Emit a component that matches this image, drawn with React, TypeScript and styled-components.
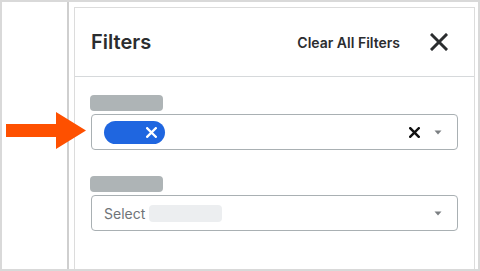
import React from 'react';
import styled, { createGlobalStyle } from 'styled-components';

const GlobalStyle = createGlobalStyle`
  html, body {
    margin: 0;
    padding: 0;
    background: #ffffff;
  }
  body {
    font-family: Inter, 'Liberation Sans', Arial, sans-serif;
  }
`;

interface FilterProps {
  selected?: boolean;
}

const CloseIcon = ({ size, stroke }: { size: number; stroke: number }) => (
  <svg width={size} height={size} viewBox="0 0 18 18" fill="none">
    <path
      d="M2 2L16 16M16 2L2 16"
      stroke="currentColor"
      strokeWidth={stroke}
      strokeLinecap="square"
    />
  </svg>
);

const Caret = () => (
  <svg width="8" height="5" viewBox="0 0 8 5">
    <path d="M0.5 0.5H7.5L4 4.5Z" fill="#7b7f82" />
  </svg>
);

const FilterField = ({ selected }: FilterProps) => (
  <Field>
    <LabelBar />
    <SelectBox>
      {selected ? (
        <Chip>
          <ChipClose>
            <CloseIcon size={11} stroke={3.8} />
          </ChipClose>
        </Chip>
      ) : (
        <Placeholder>
          Select
          <PlaceholderBar />
        </Placeholder>
      )}
      <Controls>
        {selected && (
          <ClearButton>
            <CloseIcon size={11} stroke={4} />
          </ClearButton>
        )}
        <Caret />
      </Controls>
    </SelectBox>
  </Field>
);

export default function App(): React.ReactElement {
  return (
    <>
      <GlobalStyle />
      <Frame>
        <Backdrop />
        <Drawer>
          <Panel>
            <Header>
              <Title>Filters</Title>
              <HeaderActions>
                <ClearAll>Clear All Filters</ClearAll>
                <HeaderClose>
                  <CloseIcon size={18} stroke={3} />
                </HeaderClose>
              </HeaderActions>
            </Header>
            <Body>
              <FilterField selected />
              <FilterField />
            </Body>
          </Panel>
        </Drawer>
        <Pointer viewBox="0 0 80 38" width="80" height="38">
          <path d="M0 12H50V0L80 18.5L50 37V25H0Z" fill="#fe5000" />
        </Pointer>
      </Frame>
    </>
  );
}

const Frame = styled('div')`
  position: relative;
  box-sizing: border-box;
  display: flex;
  width: 480px;
  height: 271px;
  border: 2px solid #d9d9d9;
  overflow: hidden;
`;

const Backdrop = styled('div')`
  flex: 0 0 65px;
`;

const Drawer = styled('div')`
  flex: 1;
  display: flex;
  box-sizing: border-box;
  border-left: 2px solid #cfcfcf;
  padding: 5px 3px 0 5px;
`;

const Panel = styled('div')`
  flex: 1;
  display: flex;
  flex-direction: column;
  border: 1px solid #dcdcdc;
  border-bottom: none;
`;

const Header = styled('div')`
  display: flex;
  align-items: center;
  justify-content: space-between;
  height: 68px;
  padding: 0 26px 0 16px;
  border-bottom: 1px solid #d6d9db;
`;

const Title = styled('h2')`
  margin: 0;
  font-size: 20px;
  font-weight: 600;
  color: #2b2d2f;
`;

const HeaderActions = styled('div')`
  display: flex;
  align-items: center;
  gap: 30px;
`;

const ClearAll = styled('span')`
  font-size: 14px;
  font-weight: 600;
  color: #2b2d2f;
`;

const HeaderClose = styled('span')`
  display: flex;
  color: #2b2d2f;
`;

const Body = styled('div')`
  display: flex;
  flex-direction: column;
  gap: 26px;
  padding: 18px 16px 0 15px;
`;

const Field = styled('div')`
  display: flex;
  flex-direction: column;
  gap: 3px;
`;

const LabelBar = styled('div')`
  width: 73px;
  height: 16px;
  border-radius: 4px;
  background: #aeb4b6;
`;

const SelectBox = styled('div')`
  box-sizing: border-box;
  display: flex;
  align-items: center;
  justify-content: space-between;
  height: 36px;
  margin-left: 1px;
  padding: 0 15px 0 12px;
  border: 1px solid #a9b0b3;
  border-radius: 4px;
`;

const Chip = styled('div')`
  display: flex;
  align-items: center;
  justify-content: flex-end;
  box-sizing: border-box;
  width: 61px;
  height: 23px;
  padding-right: 8px;
  border-radius: 12px;
  background: #1f66e0;
  color: #ffffff;
`;

const ChipClose = styled('span')`
  display: flex;
`;

const Placeholder = styled('div')`
  display: flex;
  align-items: center;
  gap: 4px;
  font-size: 14px;
  color: #6f7478;
`;

const PlaceholderBar = styled('span')`
  display: block;
  width: 73px;
  height: 17px;
  border-radius: 4px;
  background: #eceef0;
`;

const Controls = styled('div')`
  display: flex;
  align-items: center;
  gap: 14px;
`;

const ClearButton = styled('span')`
  display: flex;
  color: #111111;
`;

const Pointer = styled('svg')`
  position: absolute;
  left: 4px;
  top: 110px;
`;
